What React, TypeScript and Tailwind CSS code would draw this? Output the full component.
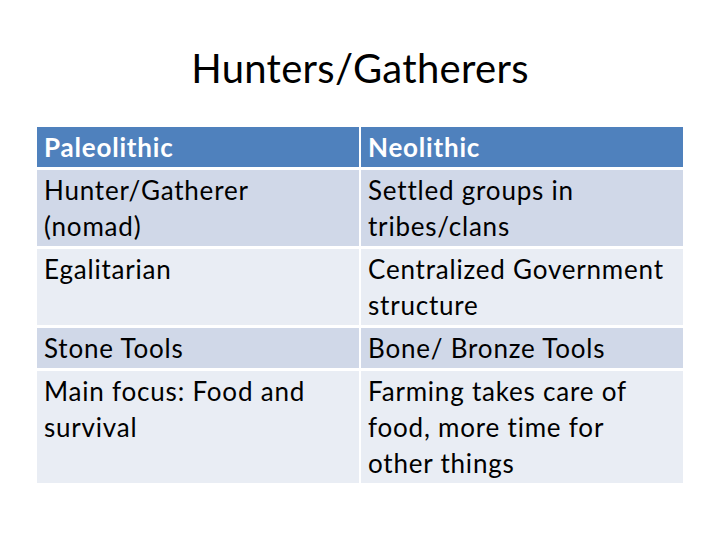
const rows: [string, string][] = [
  ["Hunter/Gatherer (nomad)", "Settled groups in tribes/clans"],
  ["Egalitarian", "Centralized Government structure"],
  ["Stone Tools", "Bone/ Bronze Tools"],
  ["Main focus: Food and survival", "Farming takes care of food, more time for other things"],
];

export default function App() {
  return (
    <div className="w-[720px] h-[540px] bg-white font-['Lato','Open_Sans',sans-serif] text-black">
      <h1 className="pt-[44px] h-[127px] text-center text-[40px] leading-[48px] tracking-[0.3px]">
        Hunters/Gatherers
      </h1>
      <div className="mx-[37px] grid grid-cols-2 gap-x-[2px] gap-y-[3px] text-[26px] leading-[36px] tracking-[0.8px]">
        <div className="bg-[#4f81bd] px-[7px] py-[2px] font-bold text-white">Paleolithic</div>
        <div className="bg-[#4f81bd] px-[7px] py-[2px] font-bold text-white">Neolithic</div>
        {rows.map(([a, b], i) => {
          const bg = i % 2 === 0 ? "bg-[#d0d8e8]" : "bg-[#e9edf4]";
          return (
            <>
              <div key={`a${i}`} className={`${bg} px-[7px] py-[2px]`}>{a}</div>
              <div key={`b${i}`} className={`${bg} px-[7px] py-[2px]`}>{b}</div>
            </>
          );
        })}
      </div>
    </div>
  );
}
